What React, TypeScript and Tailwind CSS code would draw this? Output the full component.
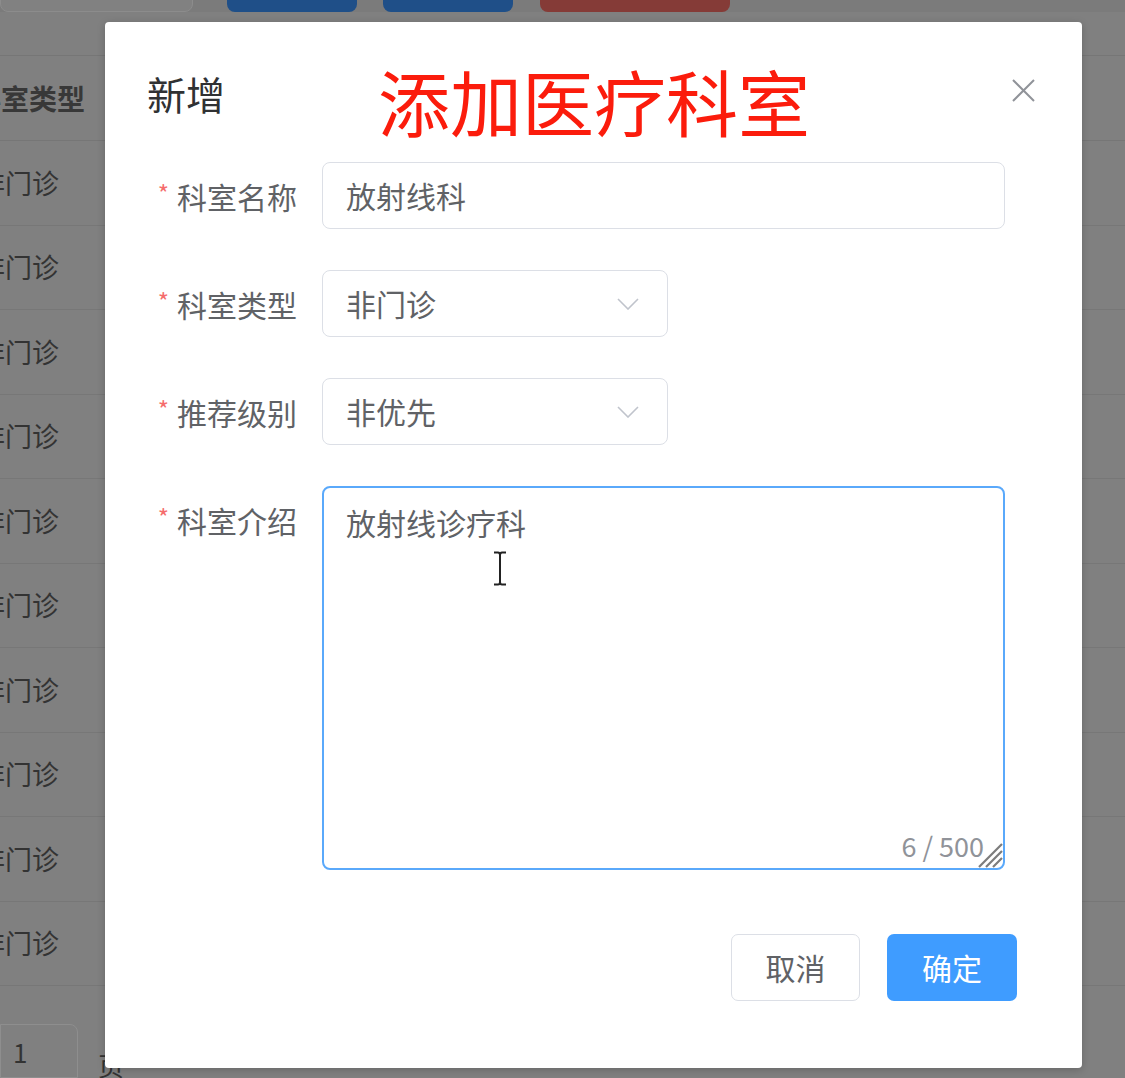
const rows = Array.from({ length: 10 }, () => "非门诊");

const fields = [
  { label: "科室名称", value: "放射线科", kind: "input" },
  { label: "科室类型", value: "非门诊", kind: "select" },
  { label: "推荐级别", value: "非优先", kind: "select" },
];

const Chevron = () => (
  <svg width="22" height="12" viewBox="0 0 22 12" fill="none">
    <polyline points="1,1 11,11 21,1" stroke="#c0c4cc" strokeWidth="1.6" />
  </svg>
);

const Label = ({ text }: { text: string }) => (
  <div className="w-[174px] shrink-0 h-[67px] flex items-center justify-end pr-[25px] text-[30px] leading-[40px] text-[#606266]">
    <span className="text-[#f56c6c] text-[24px] leading-[24px] mr-[8px] -mt-[6px]">*</span>
    {text}
  </div>
);

export default function App() {
  return (
    <div className="relative w-[1125px] h-[1078px] overflow-hidden font-['Noto_Sans_CJK_SC',sans-serif]">
      {/* page behind the mask */}
      <div className="h-full bg-[#808080] flex flex-col">
        <div className="h-[12px] flex items-end overflow-hidden bg-[#7b7b7b]">
          <div className="w-[193px] h-[40px] shrink-0 rounded-b-[8px] border border-[#8c8c8c] bg-[#818181]" />
          <div className="w-[130px] h-[40px] shrink-0 ml-[34px] rounded-b-[8px] bg-[#1f4f88]" />
          <div className="w-[130px] h-[40px] shrink-0 ml-[26px] rounded-b-[8px] bg-[#1f4f88]" />
          <div className="w-[190px] h-[40px] shrink-0 ml-[27px] rounded-b-[8px] bg-[#853b37]" />
        </div>
        <div className="mt-[43px] border-t border-[#767676]">
          <div className="h-[85px] flex items-center border-b border-[#767676] text-[28px] font-bold text-[#383838]">
            <span className="-ml-[27px]">科室类型</span>
          </div>
          {rows.map((r, i) => (
            <div key={i} className="h-[84.5px] flex items-center border-b border-[#777777] text-[27px] text-[#333333]">
              <span className="-ml-[22px]">{r}</span>
            </div>
          ))}
        </div>
        <div className="mt-auto flex items-end gap-[20px]">
          <div className="w-[78px] h-[54px] border border-[#8e8e8e] rounded-tr-[8px] flex items-center pl-[12px] text-[26px] text-[#333]">
            1
          </div>
          <span className="text-[26px] text-[#333] mb-[-6px]">页</span>
        </div>
      </div>

      {/* dialog */}
      <div className="absolute left-[105px] top-[22px] w-[977px] h-[1046px] bg-white rounded-[4px] shadow-[0_2px_8px_rgba(0,0,0,0.2)] flex flex-col">
        <div className="relative pt-[51px] pl-[42px]">
          <div className="text-[39px] leading-[40px] text-[#303133]">新增</div>
          <svg className="absolute left-[907px] top-[57px]" width="23" height="23" viewBox="0 0 23 23">
            <path d="M1 1 L22 22 M22 1 L1 22" stroke="#909399" strokeWidth="2" />
          </svg>
          <div className="absolute left-[273px] top-[42px] text-[72px] leading-[72px] text-[#fb1c0c] whitespace-nowrap">
            添加医疗科室
          </div>
        </div>

        <div className="mt-[49px] pl-[43px] flex flex-col gap-[41px]">
          {fields.map((f) => (
            <div key={f.label} className="flex">
              <Label text={f.label} />
              <div
                className={`h-[67px] rounded-[8px] border border-[#dcdfe6] flex items-center justify-between pl-[23px] pr-[28px] text-[30px] text-[#606266] ${
                  f.kind === "input" ? "w-[683px]" : "w-[346px]"
                }`}
              >
                <span>{f.value}</span>
                {f.kind === "select" && <Chevron />}
              </div>
            </div>
          ))}
          <div className="flex">
            <Label text="科室介绍" />
            <div className="relative w-[683px] h-[384px] rounded-[8px] border-2 border-[#5aa9fb] pl-[22px] pt-[13px] text-[30px] leading-[42px] text-[#606266]">
              放射线诊疗科
              <svg className="absolute left-[168px] top-[63px]" width="16" height="35" viewBox="0 0 16 35" fill="none">
                <path d="M2 1.5 H6 Q8 1.5 8 4 V31 Q8 33.5 6 33.5 H2 M14 1.5 H10 Q8 1.5 8 4 M8 31 Q8 33.5 10 33.5 H14" stroke="#222" strokeWidth="2" />
              </svg>
              <div className="absolute right-[19px] bottom-[8px] text-[27px] leading-[28px] text-[#909399]">6 / 500</div>
              <svg className="absolute right-0 bottom-0" width="30" height="30" viewBox="0 0 30 30">
                <path d="M29 6 L6 29 M29 13 L13 29 M29 20 L20 29" stroke="#7c7c7c" strokeWidth="2.2" />
              </svg>
            </div>
          </div>
        </div>

        <div className="mt-[64px] flex justify-end gap-[27px] pr-[65px]">
          <button className="w-[129px] h-[67px] rounded-[7px] border border-[#dcdfe6] bg-white text-[30px] text-[#606266]">
            取消
          </button>
          <button className="w-[130px] h-[67px] rounded-[7px] bg-[#3f9cff] text-[30px] text-white">确定</button>
        </div>
      </div>
    </div>
  );
}
